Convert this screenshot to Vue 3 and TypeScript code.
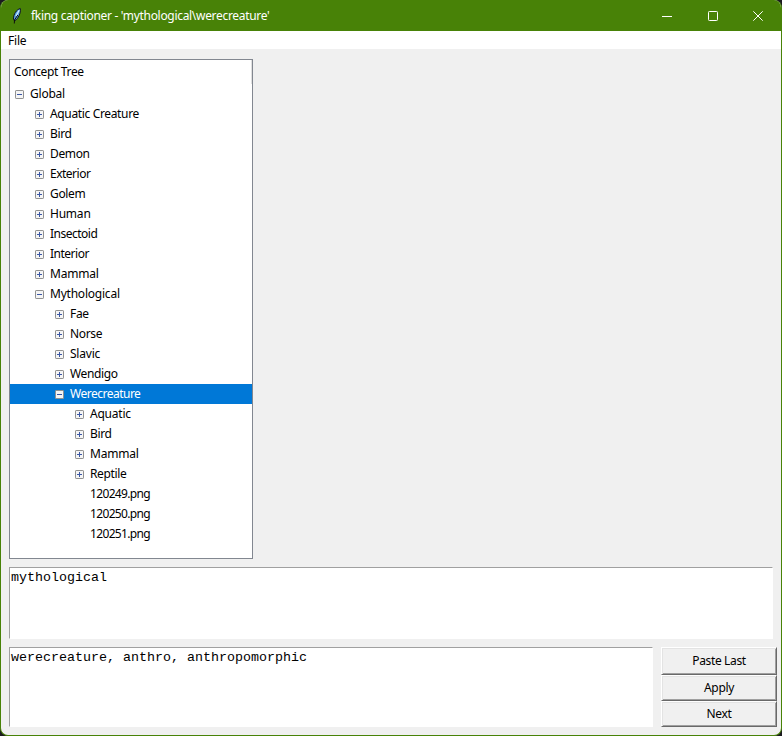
<script setup lang="ts">
import { ref } from 'vue'

interface Row {
  label: string
  depth: number
  state: 'open' | 'closed' | 'leaf'
  fit?: 'loose' | 'tight'
}

const rows: Row[] = [
  { label: 'Global', depth: 0, state: 'open', fit: 'loose' },
  { label: 'Aquatic Creature', depth: 1, state: 'closed' },
  { label: 'Bird', depth: 1, state: 'closed' },
  { label: 'Demon', depth: 1, state: 'closed' },
  { label: 'Exterior', depth: 1, state: 'closed', fit: 'tight' },
  { label: 'Golem', depth: 1, state: 'closed' },
  { label: 'Human', depth: 1, state: 'closed', fit: 'loose' },
  { label: 'Insectoid', depth: 1, state: 'closed', fit: 'tight' },
  { label: 'Interior', depth: 1, state: 'closed', fit: 'tight' },
  { label: 'Mammal', depth: 1, state: 'closed', fit: 'loose' },
  { label: 'Mythological', depth: 1, state: 'open', fit: 'loose' },
  { label: 'Fae', depth: 2, state: 'closed' },
  { label: 'Norse', depth: 2, state: 'closed' },
  { label: 'Slavic', depth: 2, state: 'closed', fit: 'loose' },
  { label: 'Wendigo', depth: 2, state: 'closed' },
  { label: 'Werecreature', depth: 2, state: 'open', fit: 'tight' },
  { label: 'Aquatic', depth: 3, state: 'closed', fit: 'loose' },
  { label: 'Bird', depth: 3, state: 'closed' },
  { label: 'Mammal', depth: 3, state: 'closed', fit: 'loose' },
  { label: 'Reptile', depth: 3, state: 'closed' },
  { label: '120249.png', depth: 3, state: 'leaf' },
  { label: '120250.png', depth: 3, state: 'leaf' },
  { label: '120251.png', depth: 3, state: 'leaf' },
]

const selected = ref(15)
const inherited = ref('mythological')
const caption = ref('werecreature, anthro, anthropomorphic')
</script>

<template>
  <div class="desktop">
    <div class="window">
      <header class="titlebar">
        <svg class="feather" width="12" height="18" viewBox="0 0 12 18">
          <path d="M9.3 1.5 C5.5 2.5 2.4 7 2.5 12 L3.6 14 C7.4 11.5 10 6 9.3 1.5Z" fill="#5aa5e8" stroke="#10151c" />
          <path d="M8.2 3.2 L5 9" stroke="#d3ecfd" stroke-width="1.2" />
          <path d="M6.8 8 L3.5 13 L3.3 16.5" fill="none" stroke="#101010" />
        </svg>
        <span class="title">fking captioner - 'mythological\werecreature'</span>
        <div class="controls">
          <svg width="10" height="10" viewBox="0 0 10 10"><path d="M0 5.5H10" stroke="#fff" /></svg>
          <svg width="10" height="10" viewBox="0 0 10 10"><rect x=".5" y=".5" width="9" height="9" rx=".8" fill="none" stroke="#fff" /></svg>
          <svg width="10" height="10" viewBox="0 0 10 10"><path d="M.3 .3L9.7 9.7M9.7 .3L.3 9.7" stroke="#fff" /></svg>
        </div>
      </header>
      <nav class="menubar"><span>File</span></nav>
      <main class="content">
        <section class="tree">
          <div class="heading">Concept Tree</div>
          <div
            v-for="(row, i) in rows"
            :key="i"
            class="row"
            :class="['depth' + row.depth, row.state, row.fit, { selected: i === selected }]"
            @click="selected = i"
          >
            <svg class="toggle" width="9" height="9" viewBox="0 0 9 9">
              <g v-if="row.state !== 'leaf'">
                <rect x=".5" y=".5" width="8" height="8" rx=".6" fill="#f5f5f5" stroke="#919191" />
                <path d="M2 4.5H7" stroke="#3a56a5" />
                <path v-if="row.state === 'closed'" d="M4.5 2V7" stroke="#3a56a5" />
              </g>
            </svg>
            <span class="label">{{ row.label }}</span>
          </div>
        </section>
        <div class="field upper">{{ inherited }}</div>
        <div class="bottom">
          <div class="field lower">{{ caption }}</div>
          <div class="buttons">
            <button class="first">Paste Last</button>
            <button>Apply</button>
            <button>Next</button>
          </div>
        </div>
      </main>
    </div>
  </div>
</template>

<style>
body {
  background: #1b1b1f;
  overflow: hidden;
}
</style>

<style scoped>
.desktop {
  width: 782px;
  height: 736px;
  background: #1b1b1f;
  font: 12px/20px 'Noto Sans', 'Open Sans', sans-serif;
  letter-spacing: -0.35px;
  color: #000;
}
.window {
  box-sizing: border-box;
  height: 736px;
  display: flex;
  flex-direction: column;
  border: 1px solid #488207;
  border-top: 0;
  border-radius: 8px;
  background: #f0f0f0;
  overflow: hidden;
}
.titlebar {
  height: 31px;
  flex: none;
  display: flex;
  align-items: center;
  background: #488207;
  color: #fff;
}
.feather {
  margin-left: 10px;
  flex: none;
}
.title {
  margin-left: 8px;
  white-space: pre;
  letter-spacing: -0.31px;
}
.controls {
  margin-left: auto;
  margin-right: 18px;
  display: flex;
  gap: 35.5px;
}
.controls svg {
  display: block;
}
.menubar {
  height: 18px;
  flex: none;
  padding-left: 7px;
  background: #fff;
  line-height: 20px;
  letter-spacing: -0.2px;
}
.content {
  padding: 10px 4px 0 8px;
}
.tree {
  box-sizing: border-box;
  width: 244px;
  height: 500px;
  border: 1px solid #828790;
  background: #fff;
}
.heading {
  box-sizing: border-box;
  height: 24px;
  padding-left: 4px;
  border-right: 1px solid #e0e0e0;
  line-height: 23px;
}
.row {
  height: 20px;
  display: flex;
  align-items: center;
  padding-left: 5px;
}
.depth1 {
  padding-left: 25px;
}
.depth2 {
  padding-left: 45px;
}
.depth3 {
  padding-left: 65px;
}
.loose {
  letter-spacing: -0.22px;
}
.tight {
  letter-spacing: -0.5px;
}
.leaf {
  letter-spacing: -0.65px;
}
.toggle {
  margin-top: 1px;
  flex: none;
}
.label {
  margin-left: 6px;
}
.selected {
  background: #0078d7;
  color: #fff;
}
.field {
  box-sizing: border-box;
  padding: 2px 1px;
  border: 1px solid;
  border-color: #a0a0a0 #fff #fff #a0a0a0;
  background: #fff;
  font: 13.333px/15px 'Liberation Mono', monospace;
  letter-spacing: 0;
}
.upper {
  width: 764px;
  height: 72px;
  margin-top: 8px;
}
.bottom {
  display: flex;
  gap: 8px;
  margin-top: 8px;
}
.lower {
  width: 644px;
  height: 80px;
}
.buttons {
  width: 116px;
  display: flex;
  flex-direction: column;
}
button {
  box-sizing: border-box;
  height: 26px;
  padding: 0;
  border: 1px solid;
  border-color: #fff #696969 #696969 #fff;
  box-shadow: inset 1px 1px #e3e3e3, inset -1px -1px #a0a0a0;
  background: #f0f0f0;
  font: inherit;
  letter-spacing: inherit;
  color: inherit;
}
.first {
  height: 28px;
}
</style>
